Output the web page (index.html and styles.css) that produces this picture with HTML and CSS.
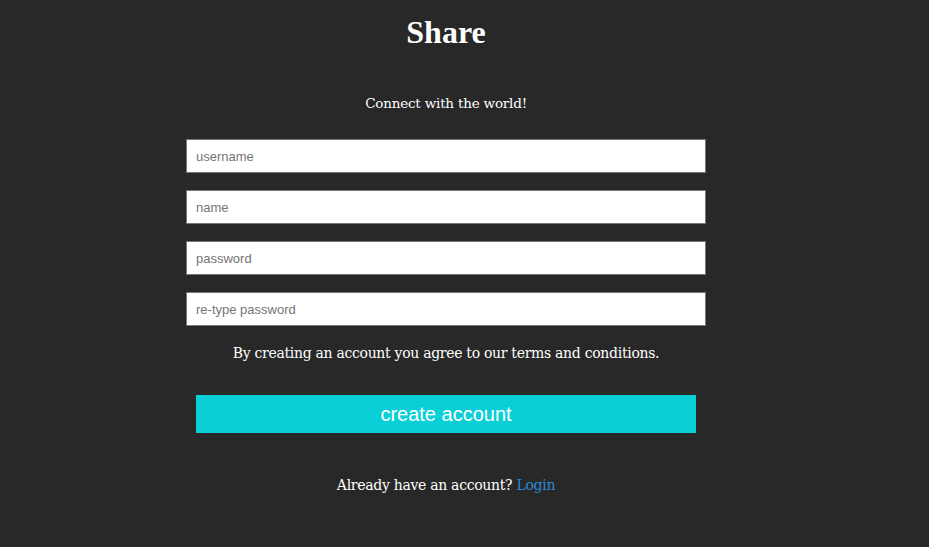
FILE: index.html
```html
<!DOCTYPE html>
<html>
<head>
<meta charset="utf-8">
<link rel="stylesheet" href="styles.css">
</head>
<body>
<main class="page">
  <h1 class="title">Share</h1>
  <p class="tagline">Connect with the world!</p>
  <form class="form">
    <input class="field" type="text" placeholder="username">
    <input class="field" type="text" placeholder="name">
    <input class="field" type="password" placeholder="password">
    <input class="field" type="password" placeholder="re-type password">
    <p class="terms">By creating an account you agree to our terms and conditions.</p>
    <button class="submit" type="button">create account</button>
  </form>
  <p class="login">Already have an account? <a class="login-link" href="#">Login</a></p>
</main>
</body>
</html>
```
FILE: styles.css
```css
html, body {
  margin: 0;
  padding: 0;
  background: #282828;
  height: 100%;
}
body {
  font-family: "DejaVu Serif", serif;
  color: #ffffff;
  padding-right: 37px;
}
.page {
  width: 520px;
  margin: 0 auto;
  display: flex;
  flex-direction: column;
  align-items: center;
}
.title {
  margin: 14px 0 0;
  font-family: "Liberation Serif", serif;
  font-size: 32px;
  font-weight: bold;
  line-height: 36px;
}
.tagline {
  margin: 43px 0 0;
  font-size: 13.5px;
  letter-spacing: -0.2px;
  line-height: 20px;
}
.form {
  margin-top: 26px;
  width: 520px;
  display: flex;
  flex-direction: column;
  align-items: center;
  gap: 17px;
}
.field {
  box-sizing: border-box;
  width: 520px;
  height: 34px;
  margin: 0;
  border: 1px solid #767676;
  background: #fff;
  padding: 0 9px;
  font-family: "Liberation Sans", Arial, sans-serif;
  font-size: 13px;
  color: #333;
  outline: none;
}
.field::placeholder {
  color: #757575;
}
.terms {
  margin: 0;
  font-size: 14px;
  letter-spacing: -0.3px;
  line-height: 20px;
}
.submit {
  margin-top: 15px;
  width: 500px;
  height: 38px;
  border: none;
  background: #0acfd7;
  color: #fff;
  font-family: "Liberation Sans", Arial, sans-serif;
  font-size: 20px;
  cursor: pointer;
}
.login {
  margin: 42px 0 0;
  font-size: 14px;
  letter-spacing: -0.3px;
  line-height: 20px;
}
.login-link {
  color: #2b8ad6;
  text-decoration: none;
}
```
